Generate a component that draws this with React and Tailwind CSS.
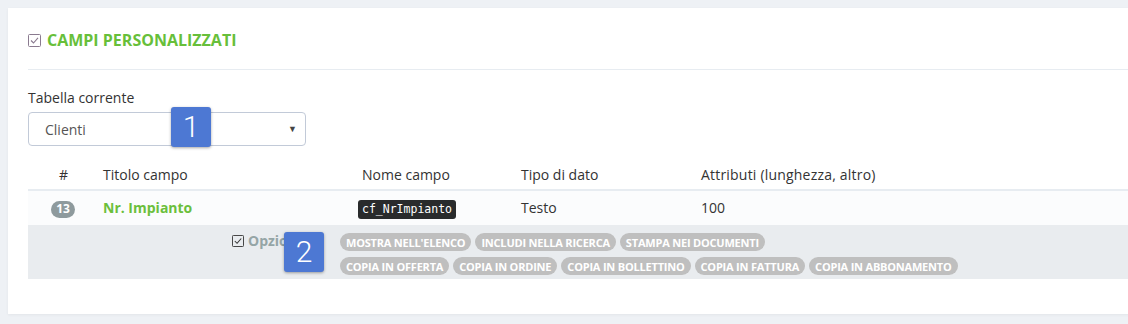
import React from "react";

const CheckIcon = ({ className = "", stroke = "#555" }) => (
  <svg viewBox="0 0 13 13" className={className} fill="none">
    <rect x="0.5" y="0.5" width="12" height="12" rx="1" stroke={stroke} strokeWidth="1" />
    <path d="M3 6.5 L5.5 9 L10 3.8" stroke={stroke} strokeWidth="1.1" />
  </svg>
);

const Tag = ({ children }) => (
  <span className="inline-flex h-[18px] items-center rounded-full bg-[#bfbfbf] px-[6px] text-[11px] font-bold leading-none tracking-[-0.2px] text-white">
    {children}
  </span>
);

const Marker = ({ n, className }) => (
  <div
    className={
      "absolute flex h-[40px] w-[40px] items-center justify-center rounded-[3px] bg-[#4d78d3] text-[30px] leading-none text-white shadow-[0_1px_3px_rgba(0,0,0,0.35)] " +
      className
    }
    style={{ fontFamily: "Roboto, 'Liberation Sans', sans-serif", fontWeight: 300 }}
  >
    {n}
  </div>
);

export default function App() {
  return (
    <div
      className="min-h-[324px] w-[1128px] overflow-hidden bg-[#eef1f5] pl-[8px] pt-[8px]"
      style={{ fontFamily: "'Open Sans', 'Liberation Sans', sans-serif" }}
    >
      <div className="relative h-[306px] w-[1140px] bg-white px-[20px] shadow-[0_1px_3px_rgba(0,0,0,0.05)]">
        {/* heading */}
        <div className="flex h-[62px] items-end border-b border-[#e7ecf1] pb-[19px]">
          <div className="flex items-center gap-[6px]">
            <CheckIcon className="h-[13px] w-[13px]" stroke="#8a7a8f" />
            <span className="text-[16px] font-bold leading-[20px] text-[#67bf3a]">CAMPI PERSONALIZZATI</span>
          </div>
        </div>

        {/* select */}
        <div className="pt-[18px]">
          <div className="text-[14px] leading-[20px] text-[#333]">Tabella corrente</div>
          <div className="relative mt-[4px] flex h-[34px] w-[278px] items-center rounded-[4px] border border-[#c2cad8] pl-[16px] pr-[8px] text-[14px] text-[#555]">
            <span className="flex-1">Clienti</span>
            <span className="text-[9px] text-[#444]">▼</span>
          </div>
          <Marker n="1" className="left-[163px] top-[99px]" />
        </div>

        {/* table */}
        <div className="mt-[13px] text-[14px] text-[#333]">
          <div className="flex h-[32px] items-center border-b-2 border-[#e7ecf1]">
            <div className="w-[67px] pl-[31px]">#</div>
            <div className="w-[259px] pl-[8px]">Titolo campo</div>
            <div className="w-[159px] pl-[8px]">Nome campo</div>
            <div className="w-[180px] pl-[8px]">Tipo di dato</div>
            <div className="pl-[8px] tracking-[0.2px]">Attributi (lunghezza, altro)</div>
          </div>
          <div className="flex h-[34px] items-center bg-[#fbfcfd] pb-[1px]">
            <div className="w-[67px] pl-[23px]">
              <span className="inline-flex h-[17px] w-[24px] items-center justify-center rounded-full bg-[#8e9a9d] text-[12px] font-bold text-white">13</span>
            </div>
            <div className="w-[259px] pl-[8px] font-bold text-[#6bbf3c]">Nr. Impianto</div>
            <div className="w-[159px] pl-[4px]">
              <code
                className="inline-block rounded-[3px] bg-[#292b2c] px-[4px] py-[1px] text-[11.5px] leading-[17px] text-white"
                style={{ fontFamily: "'DejaVu Sans Mono', 'Liberation Mono', monospace" }}
              >
                cf_NrImpianto
              </code>
            </div>
            <div className="w-[180px] pl-[8px]">Testo</div>
            <div className="pl-[8px]">100</div>
          </div>
          <div className="relative flex h-[54px] bg-[#e9ecef]">
            <div className="w-[312px] pl-[204px] pt-[6px]">
              <div className="flex items-center gap-[4px]">
                <CheckIcon className="h-[12px] w-[12px]" stroke="#333" />
                <span className="text-[14px] font-bold leading-[20px] text-[#95a5a6]">Opzioni</span>
              </div>
            </div>
            <div className="flex flex-col gap-[6px] pt-[8px]">
              <div className="flex gap-[4px]">
                <Tag>MOSTRA NELL'ELENCO</Tag>
                <Tag>INCLUDI NELLA RICERCA</Tag>
                <Tag>STAMPA NEI DOCUMENTI</Tag>
              </div>
              <div className="flex gap-[4px]">
                <Tag>COPIA IN OFFERTA</Tag>
                <Tag>COPIA IN ORDINE</Tag>
                <Tag>COPIA IN BOLLETTINO</Tag>
                <Tag>COPIA IN FATTURA</Tag>
                <Tag>COPIA IN ABBONAMENTO</Tag>
              </div>
            </div>
            <Marker n="2" className="left-[256px] top-[7px]" />
          </div>
        </div>
      </div>
    </div>
  );
}
